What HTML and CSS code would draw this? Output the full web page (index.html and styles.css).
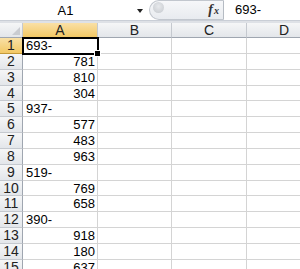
FILE: index.html
```html
<!DOCTYPE html>
<html lang="en">
<head>
    <meta charset="UTF-8">
    <title>Sheet1</title>
    <link rel="stylesheet" href="styles.css">
</head>
<body>
    <div class="formula-bar">
        <div class="name-box">
            <span class="name">A1</span>
            <span class="arrow"></span>
        </div>
        <div class="fx-box">
            <span class="knob"></span>
            <span class="fx"><i>f</i><i class="x">x</i></span>
        </div>
        <div class="formula">693-</div>
    </div>
    <div class="band"></div>

    <div class="sheet">
        <div class="corner"><span class="tri"></span></div>
        <div class="col-head active">A</div>
        <div class="col-head">B</div>
        <div class="col-head">C</div>
        <div class="col-head">D</div>
    </div>
    <div class="sheet rows" id="rows"></div>

    <script>
        const values = ['693-', 781, 810, 304, '937-', 577, 483, 963, '519-', 769, 658, '390-', 918, 180, 637];
        const rows = document.getElementById('rows');

        values.forEach((v, i) => {
            const n = i + 1;
            const head = document.createElement('div');
            head.className = 'row-head' + (n === 1 ? ' active' : '');
            head.textContent = n;
            rows.appendChild(head);

            const a = document.createElement('div');
            a.className = 'cell ' + (typeof v === 'number' ? 'num' : 'txt');
            a.textContent = v;
            if (n === 1) {
                a.classList.add('selected');
                const handle = document.createElement('span');
                handle.className = 'handle';
                a.appendChild(handle);
            }
            rows.appendChild(a);

            for (let c = 0; c < 3; c++) {
                const cell = document.createElement('div');
                cell.className = 'cell';
                rows.appendChild(cell);
            }
        });
    </script>
</body>
</html>
```

FILE: styles.css
```css
body {
    margin: 0;
    width: 300px;
    height: 269px;
    overflow: hidden;
    background: #fff;
    font-family: "Liberation Sans", Arial, sans-serif;
    font-size: 13px;
    color: #000;
}

/* formula bar */
.formula-bar {
    display: flex;
    height: 21px;
    background: #fff;
    border-bottom: 1px solid #c9ced6;
    box-sizing: border-box;
}

.name-box {
    width: 148px;
    display: flex;
    align-items: center;
    position: relative;
}

.name {
    width: 131px;
    text-align: center;
    padding-top: 1px;
}

.arrow {
    width: 0;
    height: 0;
    border-left: 3.5px solid transparent;
    border-right: 3.5px solid transparent;
    border-top: 4px solid #222;
    margin-left: 6px;
    margin-top: 2px;
}

.fx-box {
    width: 75px;
    margin-left: 1px;
    border: 1px solid #c2c7ce;
    border-right-color: #b5bbc3;
    border-radius: 11px 0 0 11px;
    background: linear-gradient(#f6f7f9, #e8ebef);
    display: flex;
    align-items: center;
    justify-content: space-between;
    box-sizing: border-box;
    padding: 0 4px 0 3px;
}

.knob {
    width: 11px;
    height: 11px;
    border-radius: 50%;
    background: radial-gradient(circle at 50% 40%, #e7e9ec, #c4c8cd);
    margin-top: -5px;
}

.fx {
    font-family: "Liberation Serif", serif;
    font-size: 14px;
    font-style: italic;
    font-weight: bold;
    color: #333;
}

.fx .x {
    font-size: 10px;
    margin-left: 1px;
}

.formula {
    flex: 1;
    padding: 2px 0 0 11px;
}

.band {
    height: 2px;
    background: #dee1e6;
}

/* grid */
.sheet {
    display: grid;
    grid-template-columns: 23px 75px 74px 75px 75px;
}

.corner,
.col-head,
.row-head {
    background: linear-gradient(#f5f6f7, #e3e6ea);
    color: #222;
    box-sizing: border-box;
}

.corner {
    height: 15px;
    border-right: 1px solid #c5c9cf;
    border-bottom: 1px solid #9fa6b0;
    position: relative;
}

.tri {
    position: absolute;
    right: 2px;
    bottom: 2px;
    width: 0;
    height: 0;
    border-left: 8px solid transparent;
    border-bottom: 8px solid #c9ccd1;
}

.col-head {
    height: 15px;
    text-align: center;
    line-height: 15px;
    font-size: 14px;
    border-right: 1px solid #c5c9cf;
    border-bottom: 1px solid #9fa6b0;
}

.row-head {
    height: 15.85px;
    text-align: center;
    line-height: 15px;
    font-size: 14px;
    border-right: 1px solid #9fa6b0;
    border-bottom: 1px solid #c5c9cf;
}

.col-head.active,
.row-head.active {
    background: linear-gradient(#f9e0a6, #f2c865);
    border-bottom-color: #c49a3a;
}

.row-head.active {
    border-right-color: #c49a3a;
}

.cell {
    height: 15.85px;
    box-sizing: border-box;
    border-right: 1px solid #d4d4d4;
    border-bottom: 1px solid #d4d4d4;
    line-height: 15px;
    padding: 0 2px 0 3px;
    white-space: nowrap;
}

.cell.num {
    text-align: right;
}

.cell.selected {
    position: relative;
    outline: 2px solid #000;
    outline-offset: -1px;
    z-index: 1;
}

.handle {
    position: absolute;
    right: -4px;
    bottom: -4px;
    width: 5px;
    height: 5px;
    background: #000;
    border: 1px solid #fff;
}
```
